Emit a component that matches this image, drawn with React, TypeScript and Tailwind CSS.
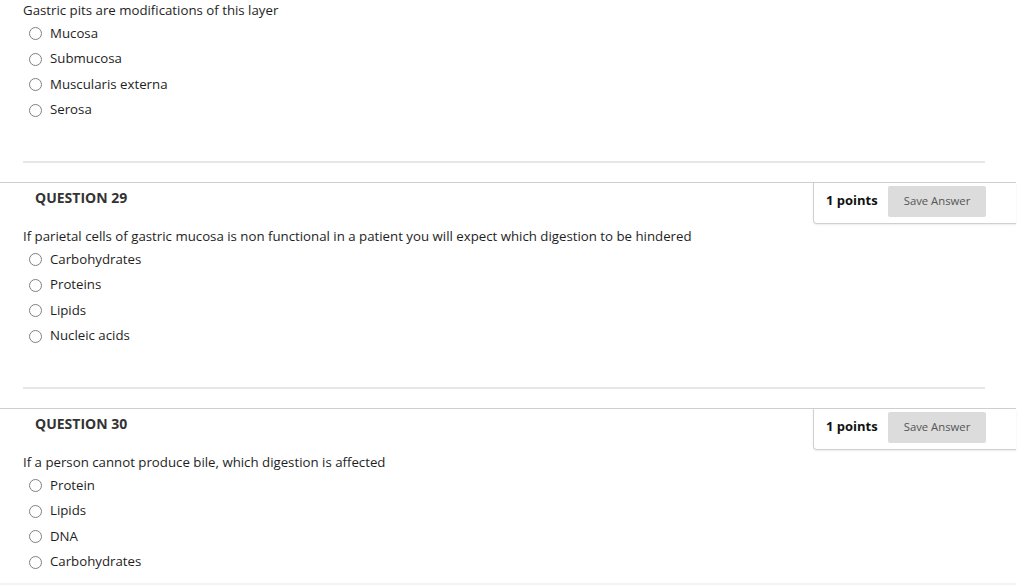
const questions = [
  {
    num: null,
    text: "Gastric pits are modifications of this layer",
    options: ["Mucosa", "Submucosa", "Muscularis externa", "Serosa"],
  },
  {
    num: 29,
    text: "If parietal cells of gastric mucosa is non functional in a patient you will expect which digestion to be hindered",
    options: ["Carbohydrates", "Proteins", "Lipids", "Nucleic acids"],
  },
  {
    num: 30,
    text: "If a person cannot produce bile, which digestion is affected",
    options: ["Protein", "Lipids", "DNA", "Carbohydrates"],
  },
];

const Radio = () => (
  <span className="ml-[6px] mr-[8px] inline-block h-[13px] w-[13px] shrink-0 rounded-full border border-[#808080] bg-white" />
);

const Body = ({ text, options }: { text: string; options: string[] }) => (
  <div className="pl-[23px]">
    <p className="h-[20px] leading-[20px] text-[13.25px] text-[#1e1e1e]">{text}</p>
    <div className="mt-[1px]">
      {options.map((o) => (
        <label key={o} className="flex h-[25.5px] items-center text-[13.25px] text-[#1e1e1e]">
          <Radio />
          {o}
        </label>
      ))}
    </div>
  </div>
);

const Separator = () => (
  <div className="mx-[23px] mt-[38px] mb-[19px] h-[2px] w-[962px] bg-[#e6e6e6]" />
);

const App = () => {
  return (
    <div
      className="w-[1016px] bg-white"
      style={{ fontFamily: '"Open Sans", "Noto Sans", sans-serif' }}
    >
      {questions.map((q) => (
        <section key={q.text}>
          {q.num !== null && (
            <div className="flex h-[42px] border-t border-[#cfcfcf]">
              <h3 className="flex-1 pl-[35px] pt-[5px] text-[14px] font-bold leading-[20px] text-[#333]">
                QUESTION {q.num}
              </h3>
              <div className="flex h-[41px] w-[203px] items-start rounded-bl-[4px] border-b border-l border-[#d0d0d0] pl-[12px] shadow-[0_1px_2px_rgba(0,0,0,0.08)]">
                <span className="mt-[7px] w-[62px] text-[13px] font-bold leading-[20px] text-[#111]">
                  1 points
                </span>
                <button className="mt-[3px] h-[31px] w-[98px] rounded-[2px] bg-[#dcdcdc] text-[11.3px] text-[#555]">
                  Save Answer
                </button>
              </div>
            </div>
          )}
          <div className={q.num !== null ? "pt-[2px]" : ""}>
            <Body text={q.text} options={q.options} />
          </div>
          {q.num !== 30 && <Separator />}
        </section>
      ))}
      <div className="mt-[8px] h-[2px] w-full bg-[#f3f3f3]" />
    </div>
  );
};

export default App;
